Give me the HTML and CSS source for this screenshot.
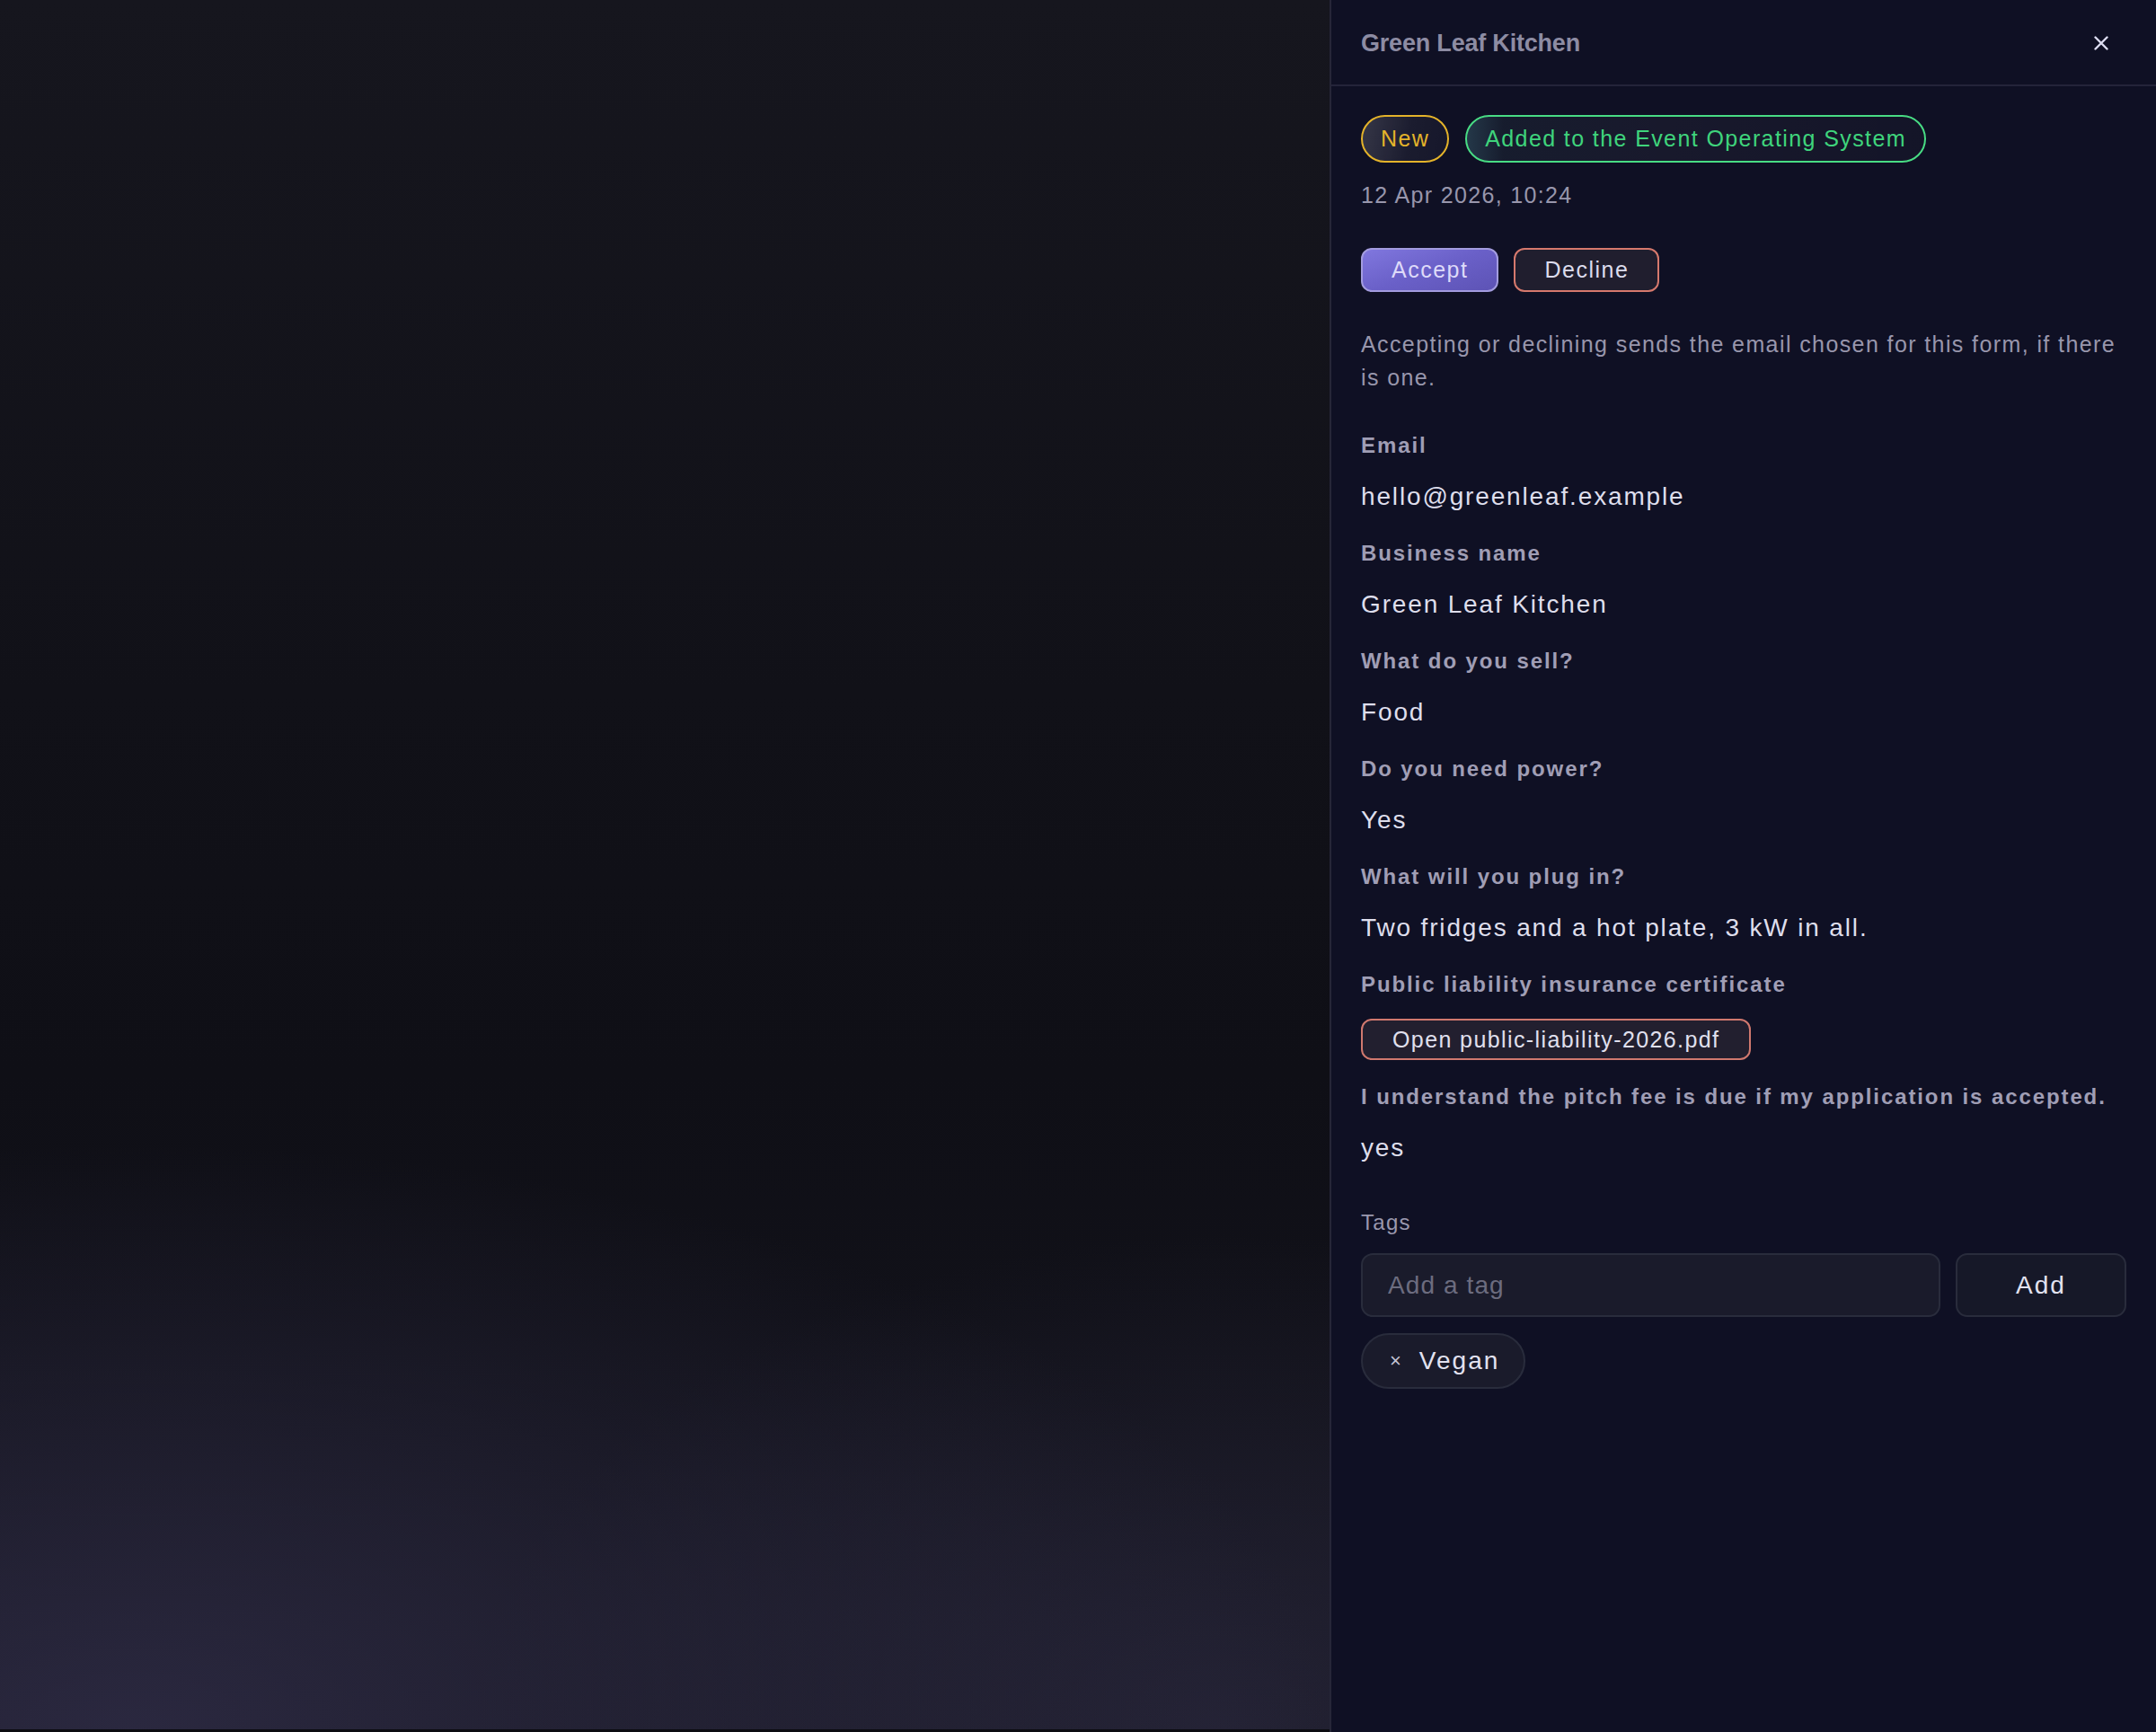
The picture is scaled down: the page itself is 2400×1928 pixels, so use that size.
FILE: index.html
```html
<!DOCTYPE html>
<html lang="en">
<head>
<meta charset="utf-8">
<title>Green Leaf Kitchen</title>
<link rel="stylesheet" href="styles.css">
</head>
<body>
<div class="page">
  <div class="backdrop"></div>
  <aside class="panel">
    <header class="panel-head">
      <h1 class="panel-title">Green Leaf Kitchen</h1>
      <button class="close-btn" aria-label="Close">
        <svg viewBox="0 0 16 16" width="16" height="16"><path d="M1.5 1.5 L14.5 14.5 M14.5 1.5 L1.5 14.5" stroke="currentColor" stroke-width="2.4" stroke-linecap="round" fill="none"/></svg>
      </button>
    </header>
    <div class="panel-body">
      <div class="badges">
        <span class="badge badge-new">New</span>
        <span class="badge badge-added">Added to the Event Operating System</span>
      </div>
      <div class="date">12 Apr 2026, 10:24</div>
      <div class="actions">
        <button class="btn btn-accept">Accept</button>
        <button class="btn btn-decline">Decline</button>
      </div>
      <p class="helper">Accepting or declining sends the email chosen for this form, if there is one.</p>

      <dl class="fields">
        <div class="field">
          <dt class="field-label">Email</dt>
          <dd class="field-value">hello@greenleaf.example</dd>
        </div>
        <div class="field">
          <dt class="field-label">Business name</dt>
          <dd class="field-value">Green Leaf Kitchen</dd>
        </div>
        <div class="field">
          <dt class="field-label">What do you sell?</dt>
          <dd class="field-value">Food</dd>
        </div>
        <div class="field">
          <dt class="field-label">Do you need power?</dt>
          <dd class="field-value">Yes</dd>
        </div>
        <div class="field">
          <dt class="field-label">What will you plug in?</dt>
          <dd class="field-value">Two fridges and a hot plate, 3 kW in all.</dd>
        </div>
        <div class="field">
          <dt class="field-label">Public liability insurance certificate</dt>
          <dd class="field-file"><button class="btn-file">Open public-liability-2026.pdf</button></dd>
        </div>
        <div class="field">
          <dt class="field-label">I understand the pitch fee is due if my application is accepted.</dt>
          <dd class="field-value">yes</dd>
        </div>
      </dl>

      <section class="tags">
        <div class="tags-label">Tags</div>
        <div class="tag-form">
          <input class="tag-input" type="text" placeholder="Add a tag">
          <button class="tag-add">Add</button>
        </div>
        <div class="tag-list">
          <span class="chip"><span class="chip-x">×</span><span class="chip-text">Vegan</span></span>
        </div>
      </section>
    </div>
  </aside>
</div>
</body>
</html>
```

FILE: styles.css
```css
* { box-sizing: border-box; }

html, body {
  margin: 0;
  padding: 0;
  height: 100%;
}

body {
  font-family: "Liberation Sans", Arial, sans-serif;
  background: #121219;
  color: #e0e0ee;
}

.page {
  display: flex;
  width: 2400px;
  height: 1928px;
  overflow: hidden;
}

.backdrop {
  flex: 1;
  border-bottom: 3px solid #0c0c11;
  background:
    radial-gradient(120% 45% at 10% 100%, rgba(48, 45, 72, 0.8), rgba(48, 45, 72, 0) 75%),
    radial-gradient(75% 38% at 92% 100%, rgba(42, 40, 62, 0.7), rgba(42, 40, 62, 0) 75%),
    linear-gradient(180deg, #16161e 0%, #111118 40%, #0f0f16 62%, #14141d 100%);
}

.panel {
  width: 920px;
  flex: none;
  background: #0f1024;
  border-left: 2px solid #262638;
  display: flex;
  flex-direction: column;
}

.panel-head {
  height: 96px;
  border-bottom: 2px solid #24243a;
  display: flex;
  align-items: center;
  justify-content: space-between;
  padding: 2px 33px 0 33px;
}

.panel-title {
  margin: 0;
  font-size: 27px;
  font-weight: 700;
  letter-spacing: -0.2px;
  color: #8d8ca3;
}

.close-btn {
  width: 56px;
  height: 56px;
  border: 0;
  background: transparent;
  color: #dcdcf0;
  display: flex;
  align-items: center;
  justify-content: center;
  padding: 0;
}

.close-btn svg { width: 16px; height: 16px; display: block; }

.panel-body {
  padding: 32px 33px 40px 33px;
}

.badges {
  display: flex;
  gap: 18px;
}

.badge {
  height: 53px;
  display: inline-flex;
  align-items: center;
  padding: 0 20px;
  border-radius: 27px;
  border: 2px solid;
  font-size: 25px;
  letter-spacing: 1.4px;
}

.badge-new {
  color: #e4b32a;
  border-color: #e4b32a;
  background: linear-gradient(100deg, rgba(255, 255, 255, 0.16) 0%, rgba(255, 255, 255, 0.05) 55%, rgba(255, 255, 255, 0.03) 100%);
}

.badge-added {
  color: #3fd47c;
  border-color: #48dc84;
  background: linear-gradient(90deg, rgba(80, 140, 150, 0.32) 0%, rgba(30, 40, 55, 0.5) 8%, rgba(255, 255, 255, 0.04) 40%, rgba(255, 255, 255, 0.02) 100%);
}

.date {
  margin-top: 18px;
  line-height: 36px;
  font-size: 25px;
  letter-spacing: 1.35px;
  color: #9896ac;
}

.actions {
  display: flex;
  gap: 17px;
  margin-top: 41px;
}

.btn {
  height: 49px;
  padding: 0 32px;
  border-radius: 12px;
  border: 2px solid;
  font-family: inherit;
  font-size: 25px;
  letter-spacing: 1.5px;
  display: inline-flex;
  align-items: center;
}

.btn-accept {
  color: #dedaf9;
  border-color: #a39cdf;
  background: linear-gradient(160deg, #8077de 0%, #6a60c8 50%, #5d53b5 100%);
}

.btn-decline {
  color: #dcdcec;
  border-color: #d6796d;
  background: #201e2e;
}

.helper {
  margin: 40px 0 0 0;
  font-size: 25px;
  line-height: 37px;
  letter-spacing: 1.4px;
  color: #9896ac;
}

.fields {
  margin: 40px 0 0 0;
  display: flex;
  flex-direction: column;
  gap: 26px;
}

.field { margin: 0; }

.field-label {
  font-size: 24px;
  font-weight: 700;
  line-height: 34px;
  letter-spacing: 1.9px;
  color: #a09eb5;
}

.field-value {
  margin: 20px 0 0 0;
  font-size: 28px;
  line-height: 40px;
  letter-spacing: 1.85px;
  color: #dedeec;
}

.field-file {
  margin: 21px 0 -2px 0;
}

.btn-file {
  height: 46px;
  padding: 0 33px;
  border-radius: 12px;
  border: 2px solid #d0786e;
  background: #221f2f;
  color: #e0e0ee;
  font-family: inherit;
  font-size: 25px;
  letter-spacing: 1.4px;
  display: inline-flex;
  align-items: center;
}

.tags {
  margin-top: 46px;
}

.tags-label {
  font-size: 24px;
  line-height: 34px;
  letter-spacing: 1.3px;
  color: #9a98ae;
}

.tag-form {
  display: flex;
  gap: 17px;
  margin-top: 17px;
}

.tag-input {
  flex: 1;
  height: 71px;
  border: 2px solid #292c3c;
  border-radius: 13px;
  background: #1a1b2b;
  padding: 0 28px;
  font-family: inherit;
  font-size: 28px;
  letter-spacing: 1.1px;
  color: #e0e0ee;
  outline: none;
}

.tag-input::placeholder { color: #6c6c7f; }

.tag-add {
  width: 190px;
  height: 71px;
  border: 2px solid #292c3c;
  border-radius: 13px;
  background: #161828;
  color: #e2e2f0;
  font-family: inherit;
  font-size: 28px;
  letter-spacing: 2px;
}

.tag-list {
  display: flex;
  gap: 12px;
  margin-top: 18px;
}

.chip {
  height: 62px;
  display: inline-flex;
  align-items: center;
  padding: 0 27px 0 30px;
  border-radius: 31px;
  border: 2px solid #292c3c;
  background: #1a1b2b;
}

.chip-x {
  font-size: 22px;
  color: #c4c4d4;
  margin-right: 20px;
}

.chip-text {
  font-size: 28px;
  letter-spacing: 2px;
  color: #e2e2f0;
}
```
